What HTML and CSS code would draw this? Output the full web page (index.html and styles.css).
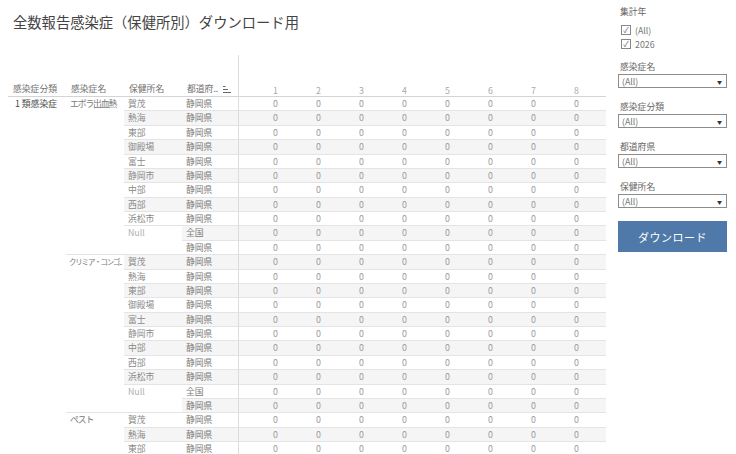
FILE: index.html
```html
<!DOCTYPE html>
<html lang="ja">
<head>
<meta charset="utf-8">
<title>全数報告感染症（保健所別）ダウンロード用</title>
<link rel="stylesheet" href="styles.css">
</head>
<body>
<div class="page">
  <div class="main">
    <h1 class="title">全数報告感染症（保健所別）ダウンロード用</h1>
    <div class="grid">
      <div class="sp4"></div><div class="d sp"></div>

      <div class="h">感染症分類</div><div class="h">感染症名</div><div class="h">保健所名</div><div class="h">都道府.. <svg class="sort" width="8" height="7" viewBox="0 0 8 7"><rect x="0" y="0" width="2.5" height="1" fill="#666"/><rect x="0" y="3" width="5" height="1" fill="#666"/><rect x="0" y="6" width="8" height="1" fill="#666"/></svg></div>
      <div class="d hd"><span>1</span><span>2</span><span>3</span><span>4</span><span>5</span><span>6</span><span>7</span><span>8</span></div>

      <!-- group 1 -->
      <div class="c1">1 類感染症</div><div class="c2 g11">エボラ出血熱</div><div class="c3">賀茂</div><div class="c4">静岡県</div><div class="d"><span>0</span><span>0</span><span>0</span><span>0</span><span>0</span><span>0</span><span>0</span><span>0</span></div>
      <div class="c3 b">熱海</div><div class="c4 b">静岡県</div><div class="d b"><span>0</span><span>0</span><span>0</span><span>0</span><span>0</span><span>0</span><span>0</span><span>0</span></div>
      <div class="c3">東部</div><div class="c4">静岡県</div><div class="d"><span>0</span><span>0</span><span>0</span><span>0</span><span>0</span><span>0</span><span>0</span><span>0</span></div>
      <div class="c3 b">御殿場</div><div class="c4 b">静岡県</div><div class="d b"><span>0</span><span>0</span><span>0</span><span>0</span><span>0</span><span>0</span><span>0</span><span>0</span></div>
      <div class="c3">富士</div><div class="c4">静岡県</div><div class="d"><span>0</span><span>0</span><span>0</span><span>0</span><span>0</span><span>0</span><span>0</span><span>0</span></div>
      <div class="c3 b">静岡市</div><div class="c4 b">静岡県</div><div class="d b"><span>0</span><span>0</span><span>0</span><span>0</span><span>0</span><span>0</span><span>0</span><span>0</span></div>
      <div class="c3">中部</div><div class="c4">静岡県</div><div class="d"><span>0</span><span>0</span><span>0</span><span>0</span><span>0</span><span>0</span><span>0</span><span>0</span></div>
      <div class="c3 b">西部</div><div class="c4 b">静岡県</div><div class="d b"><span>0</span><span>0</span><span>0</span><span>0</span><span>0</span><span>0</span><span>0</span><span>0</span></div>
      <div class="c3">浜松市</div><div class="c4">静岡県</div><div class="d"><span>0</span><span>0</span><span>0</span><span>0</span><span>0</span><span>0</span><span>0</span><span>0</span></div>
      <div class="c3 null">Null</div><div class="c4 b">全国</div><div class="d b"><span>0</span><span>0</span><span>0</span><span>0</span><span>0</span><span>0</span><span>0</span><span>0</span></div>
      <div class="c4">静岡県</div><div class="d"><span>0</span><span>0</span><span>0</span><span>0</span><span>0</span><span>0</span><span>0</span><span>0</span></div>

      <!-- group 2 -->
      <div class="c2 g11 tight">クリミア・コンゴ..</div><div class="c3 b">賀茂</div><div class="c4 b">静岡県</div><div class="d b"><span>0</span><span>0</span><span>0</span><span>0</span><span>0</span><span>0</span><span>0</span><span>0</span></div>
      <div class="c3">熱海</div><div class="c4">静岡県</div><div class="d"><span>0</span><span>0</span><span>0</span><span>0</span><span>0</span><span>0</span><span>0</span><span>0</span></div>
      <div class="c3 b">東部</div><div class="c4 b">静岡県</div><div class="d b"><span>0</span><span>0</span><span>0</span><span>0</span><span>0</span><span>0</span><span>0</span><span>0</span></div>
      <div class="c3">御殿場</div><div class="c4">静岡県</div><div class="d"><span>0</span><span>0</span><span>0</span><span>0</span><span>0</span><span>0</span><span>0</span><span>0</span></div>
      <div class="c3 b">富士</div><div class="c4 b">静岡県</div><div class="d b"><span>0</span><span>0</span><span>0</span><span>0</span><span>0</span><span>0</span><span>0</span><span>0</span></div>
      <div class="c3">静岡市</div><div class="c4">静岡県</div><div class="d"><span>0</span><span>0</span><span>0</span><span>0</span><span>0</span><span>0</span><span>0</span><span>0</span></div>
      <div class="c3 b">中部</div><div class="c4 b">静岡県</div><div class="d b"><span>0</span><span>0</span><span>0</span><span>0</span><span>0</span><span>0</span><span>0</span><span>0</span></div>
      <div class="c3">西部</div><div class="c4">静岡県</div><div class="d"><span>0</span><span>0</span><span>0</span><span>0</span><span>0</span><span>0</span><span>0</span><span>0</span></div>
      <div class="c3 b">浜松市</div><div class="c4 b">静岡県</div><div class="d b"><span>0</span><span>0</span><span>0</span><span>0</span><span>0</span><span>0</span><span>0</span><span>0</span></div>
      <div class="c3 null">Null</div><div class="c4">全国</div><div class="d"><span>0</span><span>0</span><span>0</span><span>0</span><span>0</span><span>0</span><span>0</span><span>0</span></div>
      <div class="c4 b">静岡県</div><div class="d b"><span>0</span><span>0</span><span>0</span><span>0</span><span>0</span><span>0</span><span>0</span><span>0</span></div>

      <!-- group 3 -->
      <div class="c2 g11">ペスト</div><div class="c3">賀茂</div><div class="c4">静岡県</div><div class="d"><span>0</span><span>0</span><span>0</span><span>0</span><span>0</span><span>0</span><span>0</span><span>0</span></div>
      <div class="c3 b">熱海</div><div class="c4 b">静岡県</div><div class="d b"><span>0</span><span>0</span><span>0</span><span>0</span><span>0</span><span>0</span><span>0</span><span>0</span></div>
      <div class="c3">東部</div><div class="c4">静岡県</div><div class="d"><span>0</span><span>0</span><span>0</span><span>0</span><span>0</span><span>0</span><span>0</span><span>0</span></div>
    </div>
  </div>

  <aside class="side">
    <div class="label">集計年</div>
    <div class="checks">
      <div class="check"><span class="box">✓</span><span>(All)</span></div>
      <div class="check"><span class="box">✓</span><span>2026</span></div>
    </div>
    <div class="filter">
      <div class="label">感染症名</div>
      <div class="select"><span>(All)</span><span class="arrow">▼</span></div>
    </div>
    <div class="filter">
      <div class="label">感染症分類</div>
      <div class="select"><span>(All)</span><span class="arrow">▼</span></div>
    </div>
    <div class="filter">
      <div class="label">都道府県</div>
      <div class="select"><span>(All)</span><span class="arrow">▼</span></div>
    </div>
    <div class="filter">
      <div class="label">保健所名</div>
      <div class="select"><span>(All)</span><span class="arrow">▼</span></div>
    </div>
    <div class="button">ダウンロード</div>
  </aside>
</div>
</body>
</html>
```

FILE: styles.css
```css
* { box-sizing: border-box; }
html, body {
  margin: 0;
  padding: 0;
  width: 736px;
  height: 454px;
  overflow: hidden;
  background: #fff;
  font-family: "Noto Sans CJK JP", "Noto Sans", sans-serif;
  color: #666;
}
.page {
  display: flex;
  align-items: flex-start;
}
.main {
  width: 610px;
  padding-left: 8px;
  flex: none;
}
.title {
  margin: 0;
  height: 55px;
  padding: 12px 0 0 5px;
  font-size: 14.3px;
  line-height: 20px;
  font-weight: normal;
  color: #444;
}
.grid {
  display: grid;
  grid-template-columns: 58px 58px 58px 56px 368px;
  grid-template-rows: 27px 15px;
  grid-auto-rows: 14.375px;
  font-size: 8.8px;
}
.grid > div {
  line-height: 13.375px;
  white-space: nowrap;
  overflow: hidden;
}
.sp4 { grid-column: 1 / span 4; }
.h {
  border-bottom: 1px solid #d4d4d4;
  padding-left: 5px;
  color: #707070;
  line-height: 14px !important;
}
.h .sort { margin-left: 3px; vertical-align: -0.5px; }
.c1 {
  grid-row: span 33;
  padding-left: 7px;
  color: #4a4a4a;
}
.c2 {
  padding-left: 4px;
  color: #7a7a7a;
  letter-spacing: -1.1px;
  border-bottom: 1px solid #e4e4e4;
}
.grid > .c2.tight {
  letter-spacing: -1.2px;
  font-size: 7.5px;
  padding-left: 3px;
  overflow: visible;
}
.g11 { grid-row: span 11; }
.c3 {
  grid-column: 3;
  padding-left: 4px;
  color: #8a8a8a;
  border-bottom: 1px solid #e4e4e4;
}
.c3.null {
  grid-row: span 2;
  color: #b0b0b0;
}
.c4 {
  grid-column: 4;
  padding-left: 4px;
  color: #7a7a7a;
  border-bottom: 1px solid #e4e4e4;
}
.d {
  grid-column: 5;
  display: flex;
  padding-left: 15px;
  border-left: 1px solid #dcdcdc;
  border-bottom: 1px solid #e4e4e4;
  color: #9a9a9a;
}
.d.sp { border-bottom: none; }
.d.hd {
  border-bottom: 1px solid #d4d4d4;
  color: #aaa;
  line-height: 15px !important;
  padding-top: 1px;
}
.d span {
  width: 43px;
  text-align: center;
  flex: none;
}
.b { background: #f5f5f5; }

/* side panel */
.side {
  width: 109px;
  margin-left: 8px;
  padding-top: 6px;
  flex: none;
  font-size: 8.8px;
}
.label {
  height: 12px;
  line-height: 12px;
  padding-left: 2px;
  color: #666;
}
.checks {
  margin-top: 5px;
  margin-bottom: 10px;
}
.check {
  height: 14px;
  display: flex;
  align-items: center;
  padding-left: 3px;
  color: #777;
}
.box {
  width: 10px;
  height: 10px;
  border: 1px solid #888;
  font-size: 8px;
  line-height: 8px;
  text-align: center;
  color: #666;
  margin-right: 4px;
}
.filter { margin-bottom: 13px; }
.select {
  margin-top: 1px;
  height: 14px;
  border: 1px solid #8c8c8c;
  display: flex;
  justify-content: space-between;
  align-items: center;
  padding: 0 4px 0 3px;
  color: #777;
}
.arrow {
  font-size: 5px;
  color: #333;
}
.button {
  margin-top: 1px;
  height: 31px;
  background: #4f79a8;
  color: #fff;
  font-size: 11px;
  display: flex;
  align-items: center;
  justify-content: center;
  letter-spacing: 0.5px;
}
```
